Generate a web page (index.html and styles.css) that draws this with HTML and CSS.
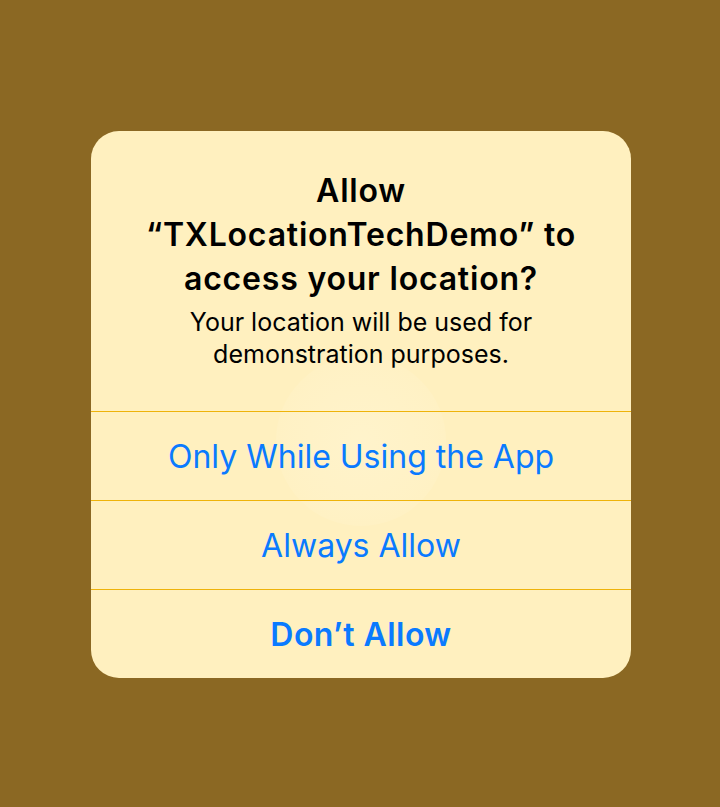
FILE: index.html
```html
<!DOCTYPE html>
<html lang="en">
<head>
<meta charset="utf-8">
<link rel="stylesheet" href="styles.css">
</head>
<body>
<div class="screen">
  <div class="alert">
    <div class="glow"></div>
    <div class="alert-header">
      <div class="alert-title">Allow<br>“TXLocationTechDemo” to<br>access your location?</div>
      <div class="alert-message">Your location will be used for<br>demonstration purposes.</div>
    </div>
    <div class="alert-action">Only While Using the App</div>
    <div class="alert-action">Always Allow</div>
    <div class="alert-action alert-action-bold">Don’t Allow</div>
  </div>
</div>
</body>
</html>
```

FILE: styles.css
```css
html, body {
  margin: 0;
  padding: 0;
}
body {
  background: #8b6823;
  font-family: Inter, "Noto Sans", "Liberation Sans", sans-serif;
}
.screen {
  width: 720px;
  height: 807px;
  display: flex;
  align-items: center;
  justify-content: center;
}
.alert {
  position: relative;
  width: 540px;
  margin-left: 2px;
  margin-top: 2px;
  background: #fff0bf;
  border-radius: 28px;
  overflow: hidden;
  display: flex;
  flex-direction: column;
}
.glow {
  position: absolute;
  left: 185px;
  top: 225px;
  width: 170px;
  height: 170px;
  border-radius: 50%;
  background: radial-gradient(circle, rgba(255, 247, 218, 0.45) 0%, rgba(255, 245, 212, 0.3) 60%, rgba(255, 240, 191, 0) 100%);
  pointer-events: none;
}
.alert-header {
  position: relative;
  padding: 38px 20px 41px;
  text-align: center;
  color: #000;
}
.alert-title {
  font-size: 32px;
  line-height: 44px;
  font-weight: 600;
  letter-spacing: 0.8px;
}
.alert-message {
  margin-top: 5px;
  font-size: 25px;
  line-height: 32px;
  font-weight: 400;
}
.alert-action {
  position: relative;
  height: 88px;
  box-sizing: content-box;
  border-top: 1px solid #eeb30a;
  display: flex;
  align-items: center;
  justify-content: center;
  color: #0a7aff;
  font-size: 32px;
  font-weight: 400;
}
.alert-action-bold {
  font-weight: 600;
  letter-spacing: 0.45px;
}
```
